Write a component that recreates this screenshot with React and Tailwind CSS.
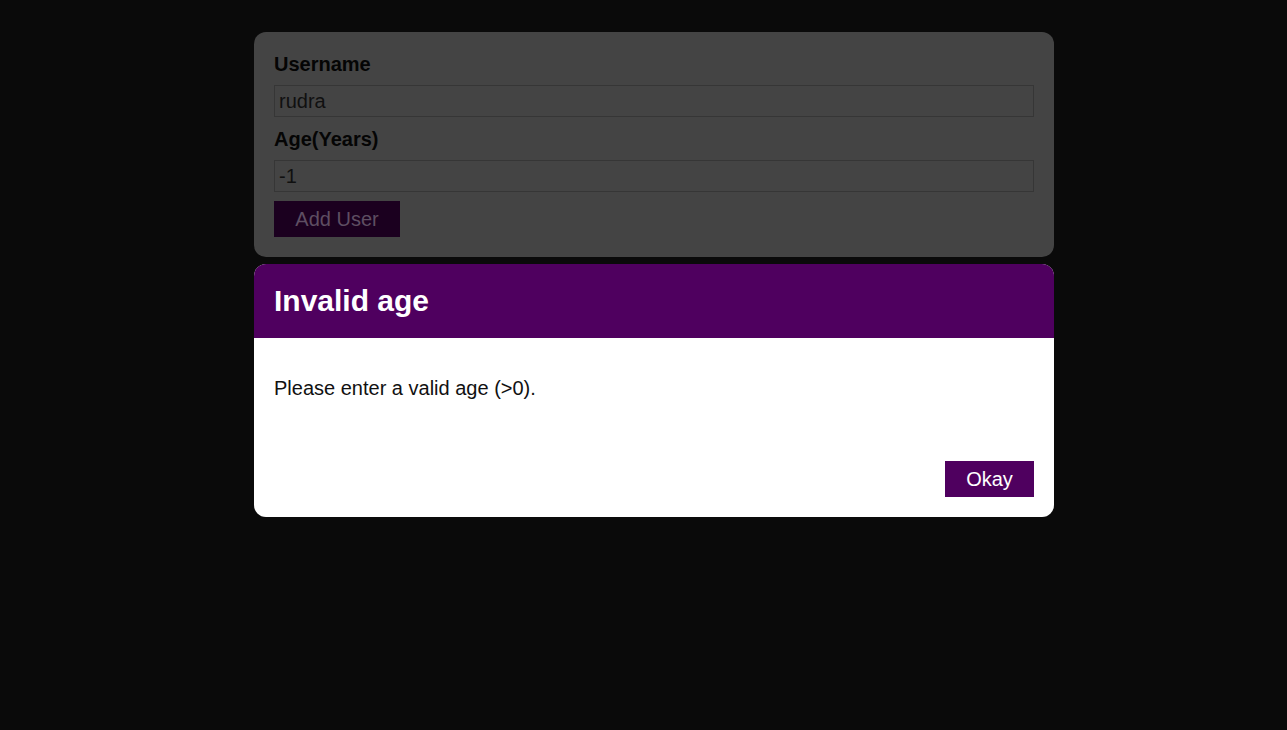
import React from 'react';

function App() {
  return (
    <div className="min-h-screen bg-[#0a0a0a] pt-8 font-['Liberation_Sans',Arial,sans-serif]">
      <div className="ml-[254px] w-[800px]">
        {/* form card, dimmed by the backdrop */}
        <div className="rounded-xl bg-[#444444] p-5">
          <label className="block text-xl font-bold leading-[25px] mb-2 text-[#050505]">Username</label>
          <div className="h-8 mb-[10px] border border-[#363636] px-1 text-xl leading-[30px] text-[#101010]">rudra</div>
          <label className="block text-xl font-bold leading-[25px] mb-2 text-[#050505]">Age(Years)</label>
          <div className="h-8 mb-[9px] border border-[#363636] px-1 text-xl leading-[30px] text-[#101010]">-1</div>
          <button className="h-9 w-[126px] bg-[#1b001f] text-xl text-[#5e4e62]">Add User</button>
        </div>

        {/* modal */}
        <div className="mt-[7px] overflow-hidden rounded-xl bg-white">
          <header className="bg-[#4f005f] px-5 py-5">
            <h2 className="text-[30px] font-bold leading-[34px] text-white">Invalid age</h2>
          </header>
          <div className="px-5 pt-5">
            <p className="my-[18px] text-xl leading-[24px] text-[#111111]">Please enter a valid age (&gt;0).</p>
          </div>
          <footer className="flex justify-end px-5 pt-[43px] pb-5">
            <button className="h-9 w-[89px] border border-[#4f005f] bg-[#4f005f] text-xl text-white">Okay</button>
          </footer>
        </div>
      </div>
    </div>
  );
}

export default App;
